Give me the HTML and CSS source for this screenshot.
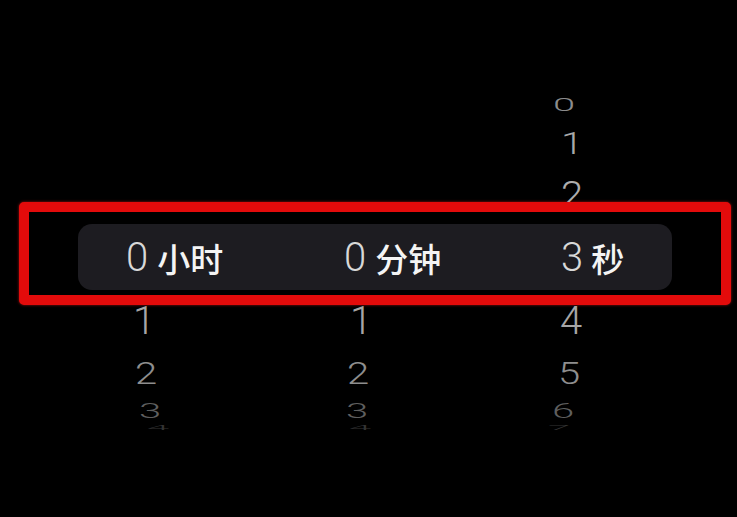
FILE: index.html
```html
<!DOCTYPE html>
<html lang="zh-CN">
<head>
<meta charset="utf-8">
<title>倒计时选择器</title>
<link rel="stylesheet" href="styles.css">
</head>
<body>
<div class="screen">
  <div class="wheel upper">
    <div class="col c1"></div>
    <div class="col c2"></div>
    <div class="col c3">
      <div class="row u0"><span class="d">0</span></div>
      <div class="row u1"><span class="d">1</span></div>
      <div class="row u2"><span class="d">2</span></div>
    </div>
  </div>
  <div class="frame">
    <div class="pill">
      <div class="grp"><span class="num">0</span><span class="lbl">小时</span></div>
      <div class="grp"><span class="num">0</span><span class="lbl">分钟</span></div>
      <div class="grp g3"><span class="num">3</span><span class="lbl">秒</span></div>
    </div>
  </div>
  <div class="wheel lower">
    <div class="col c1">
      <div class="row l1"><span class="d">1</span></div>
      <div class="row l2"><span class="d">2</span></div>
      <div class="row l3"><span class="d">3</span></div>
      <div class="row l4"><span class="d">4</span></div>
    </div>
    <div class="col c2">
      <div class="row l1"><span class="d">1</span></div>
      <div class="row l2"><span class="d">2</span></div>
      <div class="row l3"><span class="d">3</span></div>
      <div class="row l4"><span class="d">4</span></div>
    </div>
    <div class="col c3">
      <div class="row l1"><span class="d">4</span></div>
      <div class="row l2"><span class="d">5</span></div>
      <div class="row l3"><span class="d">6</span></div>
      <div class="row l4"><span class="d">7</span></div>
    </div>
  </div>
</div>
</body>
</html>
```
FILE: styles.css
```css
html, body {
  margin: 0;
  padding: 0;
  background: #000;
}

.screen {
  width: 737px;
  height: 517px;
  overflow: hidden;
  background: #000;
}

/* wheel columns */
.wheel {
  display: grid;
  grid-template-columns: 215px 212px 40px;
  padding-left: 123px;
}

.upper {
  height: 202px;
  overflow: hidden;
}

.lower {
  height: 140px;
  overflow: hidden;
}

.col {
  display: flex;
  flex-direction: column;
  align-items: flex-start;
}

.row {
  width: 40px;
  display: flex;
  justify-content: center;
  flex: none;
}

.d {
  display: block;
  flex: none;
  height: 29px;
  line-height: 29px;
  font-family: Roboto, "Noto Sans", sans-serif;
  font-weight: 300;
  font-size: 40px;
  transform-origin: top center;
}

/* rows above the selection (seconds column) */
.u0 { margin-top: 98px; height: 14px; color: #8c8c8c; }
.u0 .d { transform: scaleY(0.48); }
.u1 { margin-top: 20px; height: 23px; color: #a8a8a8; }
.u1 .d { transform: scaleY(0.79); }
.u2 { margin-top: 27px; height: 26px; color: #adadad; }
.u2 .d { transform: scaleY(0.9); }

/* rows below the selection */
.l1 { margin-top: 2px; height: 28px; color: #a6a6a6; }
.l1 .d { transform: scaleY(0.966); }
.l2 { margin-top: 27px; height: 23px; color: #8e8e8e; }
.l2 .d { transform: scaleY(0.79); }
.l3 { margin-top: 18px; height: 15px; color: #5e5e5e; }
.l3 .d { transform: scaleY(0.52); }
.l4 { margin-top: 7px; height: 5px; color: #333; }
.l4 .d { transform: scaleY(0.17); }

/* curvature drift of each column */
.c1 .l1 { margin-left: 1px; }
.c1 .l2 { margin-left: 3px; }
.c1 .l3 { margin-left: 7px; }
.c1 .l4 { margin-left: 15px; }

.c2 .l1 { margin-left: 3px; }
.c2 .l2 { margin-left: 0; }
.c2 .l3 { margin-left: -1px; }
.c2 .l4 { margin-left: 2px; }

.c3 .l1 { margin-left: 1px; }
.c3 .l2 { margin-left: -1px; }
.c3 .l3 { margin-left: -7px; }
.c3 .l4 { margin-left: -11px; }
.c3 .u0 { margin-left: -6px; }
.c3 .u1 { margin-left: 2px; }
.c3 .u2 { margin-left: 2px; }

/* highlighted selection */
.frame {
  margin-left: 19px;
  width: 712px;
  height: 103px;
  box-sizing: border-box;
  border: 10px solid #e30b0b;
  border-radius: 5px;
  box-shadow: 0 0 3px rgba(255, 30, 30, 0.6);
  background: #000;
}

.pill {
  margin: 12px 0 0 49px;
  width: 594px;
  height: 66px;
  box-sizing: border-box;
  padding-left: 48px;
  border-radius: 14px;
  background: #1d1c21;
  display: grid;
  grid-template-columns: 218px 217px 1fr;
  align-items: center;
}

.grp {
  display: flex;
  align-items: center;
}

.num {
  display: block;
  height: 29px;
  line-height: 29px;
  font-family: Roboto, "Noto Sans", sans-serif;
  font-weight: 300;
  font-size: 40px;
  color: #d8d8d8;
}

.lbl {
  margin-left: 9px;
  padding-top: 3px;
  font-family: "Noto Sans CJK SC", "Noto Sans", sans-serif;
  font-weight: 500;
  font-size: 33px;
  line-height: 33px;
  color: #f4f4f4;
}

.g3 .lbl {
  margin-left: 8px;
}
```
